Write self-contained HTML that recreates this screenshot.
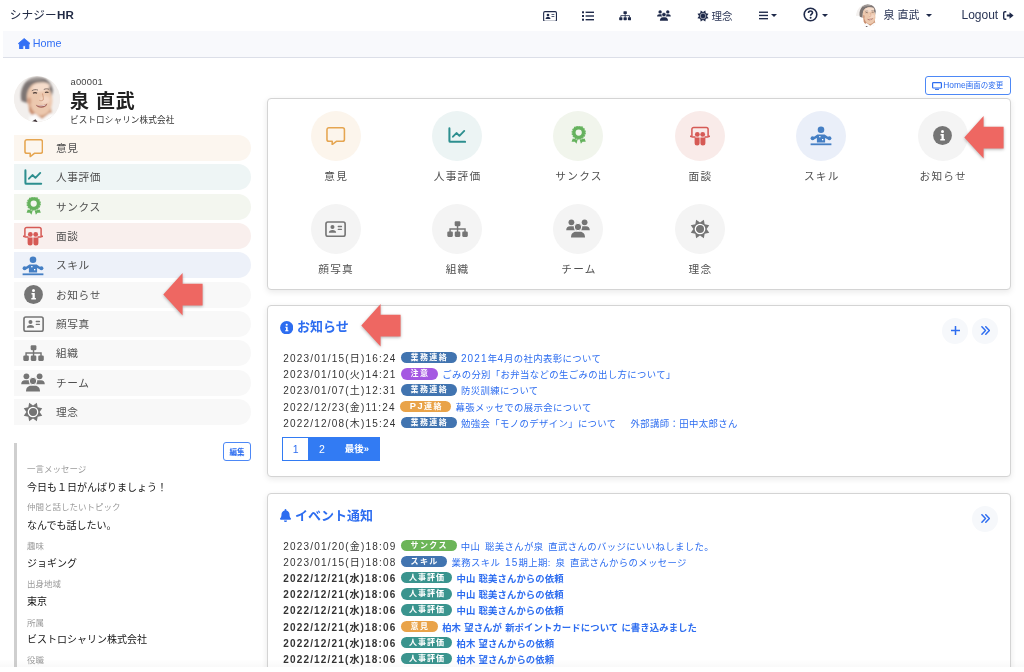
<!DOCTYPE html>
<html lang="ja">
<head>
<meta charset="utf-8">
<title>シナジーHR</title>
<style>
*{box-sizing:border-box;margin:0;padding:0}
html,body{width:1024px;height:672px;overflow:hidden;background:#fff}
body{will-change:transform;font-family:"Liberation Sans","Noto Sans CJK JP",sans-serif;color:#333;position:relative;font-size:12px}
.abs{position:absolute}
svg{display:block}
/* ---------- top nav ---------- */
#nav{position:absolute;left:0;top:0;width:1024px;height:31px;background:#fff}
#brand{position:absolute;left:9.700px;top:6.300px;font-size:11.600px;line-height:18px;color:#222b45;letter-spacing:.2px}
#brand b{font-weight:700}
.nv{position:absolute;color:#1f2a4a;fill:#1f2a4a}
.nvt{position:absolute;font-size:10.5px;line-height:16px;color:#2a3555;white-space:nowrap}
.caret{position:absolute;width:0;height:0;border-left:3px solid transparent;border-right:3px solid transparent;border-top:3.5px solid #1f2a4a}
/* ---------- breadcrumb ---------- */
#crumb{position:absolute;left:3px;top:31px;width:1021px;height:27px;background:#f8f9fc;border-bottom:1px solid #dcdfe8}
#crumb span{position:absolute;left:29.700px;top:4.300px;font-size:10.800px;line-height:16px;color:#3370f5}
/* ---------- profile ---------- */
#avatar{position:absolute;left:14.200px;top:76.300px;width:46px;height:46px;border-radius:50%;overflow:hidden;background:#f1ece8}
#uid{position:absolute;left:70.500px;top:76.300px;font-size:9.400px;letter-spacing:.2px;line-height:12px;color:#444}
#uname{position:absolute;left:70px;top:88.700px;letter-spacing:.8px;font-size:19px;line-height:26px;font-weight:700;color:#222;white-space:nowrap}
#ucomp{position:absolute;left:70px;top:113.500px;letter-spacing:.1px;font-size:8.600px;line-height:13px;color:#333;white-space:nowrap}
/* ---------- side menu ---------- */
.mi{position:absolute;left:14px;width:236.5px;height:26px;border-radius:0 13px 13px 0;font-size:10.7px;line-height:26px;color:#505050;letter-spacing:.6px;padding-left:42px;white-space:nowrap}
.mi svg{position:absolute;left:9px;top:4px}
/* ---------- profile info ---------- */
#pinfo{position:absolute;left:13.6px;top:442.5px;width:3.6px;height:240px;background:#cfcfcf}
.btn{position:absolute;border:1px solid #4d88f6;border-radius:3px;color:#2d6df0;background:#fff;white-space:nowrap;text-align:center}
.pl{position:absolute;left:27px;font-size:8.5px;line-height:12px;color:#9a9a9a;white-space:nowrap}
.pv{position:absolute;left:27px;font-size:10px;line-height:16px;color:#151515;white-space:nowrap}
/* ---------- cards ---------- */
.card{position:absolute;left:267px;width:744px;background:#fff;border:1px solid #d4d4d4;border-radius:4px;box-shadow:0 2px 6px rgba(0,0,0,.09)}
.ic{position:absolute;width:50px;height:50px;border-radius:50%}
.il{position:absolute;width:120px;text-align:center;font-size:10.7px;line-height:16px;color:#505050;letter-spacing:1.2px;padding-left:1.2px;white-space:nowrap}
.ct{position:absolute;font-size:13px;line-height:20px;font-weight:700;color:#2d6df0;white-space:nowrap}
.row{position:absolute;left:283.3px;font-size:9.4px;line-height:16px;color:#333;white-space:nowrap;letter-spacing:.37px}
.row .n{font-size:10px;letter-spacing:1.12px}
.row .d{font-size:10px;letter-spacing:1.19px}
.row.b .d{letter-spacing:1.16px}
.row.b a{letter-spacing:.07px}
.bd.hy{letter-spacing:1px;padding:0 7.4px 0 8.4px}
.row a{color:#2d6df0;text-decoration:none;word-spacing:1.8px}
.row.b a{word-spacing:.5px}
.row.b, .row.b a{font-weight:700}
.bd{display:inline-block;height:11.5px;line-height:11.5px;border-radius:6px;color:#fff;font-size:8px;font-weight:700;padding:0 8.6px 0 10px;margin:0 4.2px 0 4.1px;vertical-align:2px;letter-spacing:1.4px}
.rb{position:absolute;width:26px;height:26px;border-radius:50%;background:#f6f8fb;color:#2d6df0;text-align:center}
</style>
</head>
<body>

<!-- NAV -->
<div id="nav">
  <div id="brand">シナジー<b>HR</b></div>
</div>

<!-- BREADCRUMB -->
<div id="crumb">
  <svg class="abs" style="left:14.900px;top:6.500px" width="12.400" height="11.400" viewBox="0 0 12.400 11.400"><path d="M.5 5.300L6.200 .5l5.700 4.800v.5h-1v5.100H7.500V7.700H4.900v3.200H1.500V5.800h-1z" fill="#3370f5" stroke="#3370f5" stroke-width=".8" stroke-linejoin="round"/></svg>
  <span>Home</span>
</div>

<!-- PROFILE -->
<div id="avatar"><svg width="46" height="46" viewBox="0 0 46 46"><defs><filter id="fb" x="-20%" y="-20%" width="140%" height="140%"><feGaussianBlur stdDeviation=".8"/></filter><filter id="fb2" x="-20%" y="-20%" width="140%" height="140%"><feGaussianBlur stdDeviation=".45"/></filter><clipPath id="fc"><circle cx="23" cy="23" r="23"/></clipPath></defs><g clip-path="url(#fc)"><rect width="46" height="46" fill="#f2efed"/><g filter="url(#fb)"><path d="M7.500 25C5 13 11 1.500 23 1c9-.3 14.500 5 16 13.500l-1.500 7-3-9C31 8.500 27 7.500 23 8c-6 .8-9 5-9.500 11L13 27z" fill="#7d7573"/><path d="M12 6c3-3 7-4.500 11-4.500 3 0 6 1 8 2.500-6-.5-12 .5-19 2z" fill="#a39c99"/><path d="M14 25c0 7 2.500 12 5.500 15.500l-2 7.500h19l2-8c-1-3-1.500-7-1.500-11z" fill="#cf9b7c"/><ellipse cx="25.600" cy="23" rx="12.600" ry="16.600" fill="#ecc8ae" transform="rotate(-10 25.600 23)"/><ellipse cx="27" cy="11" rx="9" ry="4.500" fill="#f5dccb" transform="rotate(-8 27 11)"/><ellipse cx="31" cy="24" rx="5" ry="4" fill="#f4d6c3"/><ellipse cx="15.300" cy="25" rx="2" ry="3.600" fill="#d39f83"/><path d="M16 27c1 6 4 10 8 12l-3 4-6-8z" fill="#c98f70"/><path d="M15 41l6-3.500 7 5.500 8-6 7 2v8H15z" fill="#fcfcfc"/></g><g filter="url(#fb2)"><path d="M17.800 14.800c2-1.300 4.200-1.500 6.200-.7M29.800 13.500c1.800-.9 3.600-.9 5.200-.2" stroke="#7a6a63" stroke-width=".9" fill="none"/><path d="M19 17.300c1.300-.8 2.800-.8 4 0M31 16.500c1.200-.6 2.400-.6 3.500 0" stroke="#4a3b36" stroke-width="1.200" fill="none"/><path d="M28.500 17.500c.6 3 1.200 5 .6 6.600-1 .8-2.600.8-3.800.2" stroke="#cf987c" stroke-width=".9" fill="none"/><path d="M21.800 28.800c3.500 1 8 .6 11.600-1.400-.8 2.900-3.300 4.400-6.200 4.400-2.600 0-4.500-1.200-5.400-3z" fill="#a5645a"/><path d="M23 29.200c3 .7 6.500.4 9.300-.9-.6 1.300-2.500 2-4.700 2-2 0-3.800-.4-4.600-1.100z" fill="#f7ecea"/><path d="M17 46l4.500-2.700 2.500 3.200zM32.500 44.200l6-3.400-1.200 2.800z" fill="#3a3036"/></g></g></svg></div>
<div id="uid">a00001</div>
<div id="uname">泉 直武</div>
<div id="ucomp">ビストロシャリン株式会社</div>


<svg class="abs" style="left:543.3px;top:10.6px" width="14.1" height="10.9" viewBox="0 0 22 17"><rect x="1" y="1" width="20" height="15" rx="2" fill="none" stroke="#1f2a4a" stroke-width="1.700"/><circle cx="7.800" cy="6.300" r="2.100" fill="#1f2a4a"/><path d="M4 12.300c0-2 1.500-2.900 3.800-2.900s3.800.9 3.800 2.900z" fill="#1f2a4a"/><rect x="13.200" y="5" width="4.600" height="1.400" rx=".5" fill="#1f2a4a"/><rect x="13.200" y="8" width="4.600" height="1.400" rx=".5" fill="#1f2a4a"/></svg>
<svg class="abs" style="left:582px;top:11px" width="12" height="10" viewBox="0 0 12 10"><g fill="#1f2a4a"><rect x="0" y=".3" width="2" height="2"/><rect x="0" y="4" width="2" height="2"/><rect x="0" y="7.700" width="2" height="2"/><rect x="3.600" y=".6" width="8.400" height="1.400"/><rect x="3.600" y="4.300" width="8.400" height="1.400"/><rect x="3.600" y="8" width="8.400" height="1.400"/></g></svg>
<svg class="abs" style="left:619.0px;top:11.2px" width="12.3" height="9.5" viewBox="0 0 22 17"><rect x="8" y=".3" width="6" height="5.200" rx="1.200" fill="#1f2a4a"/><rect x=".3" y="11" width="5.800" height="5.600" rx="1.200" fill="#1f2a4a"/><rect x="8.100" y="11" width="5.800" height="5.600" rx="1.200" fill="#1f2a4a"/><rect x="15.900" y="11" width="5.800" height="5.600" rx="1.200" fill="#1f2a4a"/><path d="M11 5v6.500M3.200 11.500V8.300h15.600v3.200" fill="none" stroke="#1f2a4a" stroke-width="1.500"/></svg>
<svg class="abs" style="left:657.0px;top:10.3px" width="13.9" height="11.0" viewBox="0 0 24 19"><circle cx="5.400" cy="3.300" r="2.900" fill="#1f2a4a"/><circle cx="18.600" cy="3.300" r="2.900" fill="#1f2a4a"/><circle cx="12" cy="8" r="3.700" fill="#1f2a4a" stroke="#fff" stroke-width="1"/><path d="M.2 11.300c0-2.800 1.500-4 3.700-4h2.600c.6 0 1 .1 1.400.3-.3 1.500.2 2.800 1 3.700zM23.800 11.300c0-2.800-1.500-4-3.700-4h-2.600c-.6 0-1 .1-1.400.3.300 1.500-.2 2.800-1 3.700z" fill="#1f2a4a"/><path d="M5 18.400c0-3.500 2-5.700 4.800-5.700h4.400c2.800 0 4.800 2.200 4.800 5.700z" fill="#1f2a4a"/></svg>
<svg class="abs" style="left:696.6px;top:9.9px" width="12.0" height="12.0" viewBox="0 0 20 20"><polygon points="13.83,0.76 14.67,5.33 19.24,6.17 16.60,10.00 19.24,13.83 14.67,14.67 13.83,19.24 10.00,16.60 6.17,19.24 5.33,14.67 0.76,13.83 3.40,10.00 0.76,6.17 5.33,5.33 6.17,0.76 10.00,3.40" fill="#1f2a4a"/><circle cx="10" cy="10" r="4.700" fill="none" stroke="#fff" stroke-width="0.900"/></svg>
<div class="nvt" style="left:711.500px;top:8px">理念</div>
<svg class="abs" style="left:759px;top:10.800px" width="9.200" height="9" viewBox="0 0 10 9"><g fill="#1f2a4a"><rect y=".2" width="10" height="1.500"/><rect y="3.700" width="10" height="1.500"/><rect y="7.200" width="10" height="1.500"/></g></svg>
<div class="caret" style="left:771.200px;top:13.600px"></div>
<svg class="abs" style="left:803.200px;top:6.600px" width="15" height="15" viewBox="0 0 15 15"><circle cx="7.500" cy="7.500" r="6.300" fill="none" stroke="#1f2a4a" stroke-width="1.600"/><path d="M5.500 6c0-1.200.9-2 2-2s2 .7 2 1.800c0 1.300-1.900 1.400-1.900 2.900" fill="none" stroke="#1f2a4a" stroke-width="1.600"/><circle cx="7.600" cy="10.800" r="1" fill="#1f2a4a"/></svg>
<div class="caret" style="left:822px;top:14px"></div>
<div class="abs" style="left:856px;top:3.500px;width:23.400px;height:23.400px;border-radius:50%;overflow:hidden"><svg width="23.400" height="23.400" viewBox="0 0 46 46"><defs><filter id="gb" x="-20%" y="-20%" width="140%" height="140%"><feGaussianBlur stdDeviation=".8"/></filter><filter id="gb2" x="-20%" y="-20%" width="140%" height="140%"><feGaussianBlur stdDeviation=".45"/></filter><clipPath id="gc"><circle cx="23" cy="23" r="23"/></clipPath></defs><g clip-path="url(#gc)"><rect width="23.400" height="23.400" fill="#f2efed"/><g filter="url(#gb)"><path d="M7.500 25C5 13 11 1.500 23 1c9-.3 14.500 5 16 13.500l-1.500 7-3-9C31 8.500 27 7.500 23 8c-6 .8-9 5-9.500 11L13 27z" fill="#7d7573"/><path d="M12 6c3-3 7-4.500 11-4.500 3 0 6 1 8 2.500-6-.5-12 .5-19 2z" fill="#a39c99"/><path d="M14 25c0 7 2.500 12 5.500 15.500l-2 7.500h19l2-8c-1-3-1.500-7-1.500-11z" fill="#cf9b7c"/><ellipse cx="25.600" cy="23" rx="12.600" ry="16.600" fill="#ecc8ae" transform="rotate(-10 25.600 23)"/><ellipse cx="27" cy="11" rx="9" ry="4.500" fill="#f5dccb" transform="rotate(-8 27 11)"/><ellipse cx="31" cy="24" rx="5" ry="4" fill="#f4d6c3"/><ellipse cx="15.300" cy="25" rx="2" ry="3.600" fill="#d39f83"/><path d="M16 27c1 6 4 10 8 12l-3 4-6-8z" fill="#c98f70"/><path d="M15 41l6-3.500 7 5.500 8-6 7 2v8H15z" fill="#fcfcfc"/></g><g filter="url(#gb2)"><path d="M17.800 14.800c2-1.300 4.200-1.500 6.200-.7M29.800 13.500c1.800-.9 3.600-.9 5.200-.2" stroke="#7a6a63" stroke-width=".9" fill="none"/><path d="M19 17.300c1.300-.8 2.800-.8 4 0M31 16.500c1.200-.6 2.400-.6 3.500 0" stroke="#4a3b36" stroke-width="1.200" fill="none"/><path d="M28.500 17.500c.6 3 1.200 5 .6 6.600-1 .8-2.600.8-3.800.2" stroke="#cf987c" stroke-width=".9" fill="none"/><path d="M21.800 28.800c3.500 1 8 .6 11.600-1.400-.8 2.900-3.300 4.400-6.200 4.400-2.600 0-4.500-1.200-5.400-3z" fill="#a5645a"/><path d="M23 29.200c3 .7 6.500.4 9.300-.9-.6 1.300-2.500 2-4.700 2-2 0-3.800-.4-4.600-1.100z" fill="#f7ecea"/><path d="M17 46l4.500-2.700 2.500 3.200zM32.500 44.200l6-3.400-1.200 2.800z" fill="#3a3036"/></g></g></svg></div>
<div class="nvt" style="left:883.500px;top:6.500px;font-size:11px">泉 直武</div>
<div class="caret" style="left:925.500px;top:13.500px"></div>
<div class="nvt" style="left:961.500px;top:7px;font-size:12px">Logout</div>
<svg class="abs" style="left:1002.700px;top:11px" width="11" height="9" viewBox="0 0 11 9"><path d="M3.300.7H2A1.300 1.300 0 0 0 .7 2v5A1.300 1.300 0 0 0 2 8.300h1.300" fill="none" stroke="#1f2a4a" stroke-width="1.400"/><path d="M3.800 3.400h2.700V1.200L10.600 4.500 6.500 7.800V5.600H3.800z" fill="#1f2a4a"/></svg>
<div class="mi" style="top:135.00px;background:#fcf6ef"><svg class="abs" style="left:9.9px;top:3.3px" width="19.4" height="19.4" viewBox="0 0 20 20"><path d="M3 1.800h14a2 2 0 0 1 2 2v10a2 2 0 0 1-2 2h-6.300l-4.300 3.300v-3.300H3a2 2 0 0 1-2-2v-10a2 2 0 0 1 2-2z" fill="none" stroke="#e5a550" stroke-width="1.600" stroke-linejoin="round"/></svg>意見</div>
<div class="mi" style="top:164.33px;background:#eef5f5"><svg class="abs" style="left:10.0px;top:4.6px" width="18.6" height="16.7" viewBox="0 0 20 18"><path d="M1.500 1.500v13.500a1 1 0 0 0 1 1h16" fill="none" stroke="#2d8f8f" stroke-width="2.200" stroke-linecap="round"/><path d="M5.300 10.500l3.800-4 3.200 3 5.200-5.300" fill="none" stroke="#2d8f8f" stroke-width="2" stroke-linecap="round" stroke-linejoin="round"/></svg>人事評価</div>
<div class="mi" style="top:193.66px;background:#f3f6ef"><svg class="abs" style="left:11.6px;top:3.4px" width="15.4" height="19.2" viewBox="0 0 16 20"><circle cx="8" cy="6.900" r="5" fill="none" stroke="#65b25d" stroke-width="3.500"/><circle cx="8" cy="6.900" r="6.900" fill="none" stroke="#65b25d" stroke-width="1.100" stroke-dasharray="1.800 0.910"/><path d="M1.800 13l5.100 1.300-1.200 4.300-1.700-2.100H.6zM14.200 13l-5.100 1.300 1.200 4.300 1.700-2.100h3.400z" fill="#65b25d"/></svg>サンクス</div>
<div class="mi" style="top:222.99px;background:#f9efed"><svg class="abs" style="left:9.3px;top:3.0px" width="20.0" height="20.0" viewBox="0 0 20 20"><path d="M1.900 10V3.200a1.800 1.800 0 0 1 1.800-1.800h12.600a1.800 1.800 0 0 1 1.800 1.800V10" fill="none" stroke="#d65a55" stroke-width="1.500"/><path d="M.4 10.200c1.500 .6 3 .9 4.500 .9M19.600 10.200c-1.500 .6-3 .9-4.500 .9" fill="none" stroke="#d65a55" stroke-width="1.500" stroke-linecap="round"/><circle cx="7.300" cy="8.400" r="2.400" fill="#d65a55"/><circle cx="12.700" cy="8.400" r="2.400" fill="#d65a55"/><path d="M4.600 11.600h5v5.300a2.500 2.500 0 0 1-5 0zM10.400 11.600h5v5.300a2.500 2.500 0 0 1-5 0z" fill="#d65a55"/></svg>面談</div>
<div class="mi" style="top:252.32px;background:#edf1f9"><svg class="abs" style="left:8.3px;top:3.7px" width="22.0" height="20.0" viewBox="0 0 22 20"><circle cx="11" cy="3.800" r="3.300" fill="#457fc4"/><path d="M7.400 8.500h7.200l3.300 2.300 .9 1.200-1.300 1.300-2.400-1.200v4.400H6.900v-4.400l-2.400 1.200-1.300-1.300 .9-1.200z" fill="#457fc4"/><circle cx="2.600" cy="12.300" r="2" fill="#457fc4"/><circle cx="19.400" cy="12.300" r="2" fill="#457fc4"/><rect x=".6" y="17.400" width="20.800" height="1.800" fill="#457fc4"/><rect x="9.200" y="10" width="1.300" height="1.300" fill="#fff"/><rect x="12" y="13" width="1.300" height="1.300" fill="#fff"/></svg>スキル</div>
<div class="mi" style="top:281.65px;background:#f8f8f8"><svg class="abs" style="left:9.8px;top:3.5px" width="19.0" height="19.0" viewBox="0 0 19 19"><circle cx="9.500" cy="9.500" r="9.400" fill="#757575"/><circle cx="9.500" cy="5.400" r="1.500" fill="#fff"/><path d="M7.500 8h3.300v5h1.100v1.600H7.300V13h1.200V9.600H7.500z" fill="#fff"/></svg>お知らせ</div>
<div class="mi" style="top:310.98px;background:#f8f8f8"><svg class="abs" style="left:9.0px;top:4.8px" width="21.1" height="16.3" viewBox="0 0 22 17"><rect x="1" y="1" width="20" height="15" rx="2" fill="none" stroke="#757575" stroke-width="1.700"/><circle cx="7.800" cy="6.300" r="2.100" fill="#757575"/><path d="M4 12.300c0-2 1.500-2.900 3.800-2.900s3.800.9 3.800 2.900z" fill="#757575"/><rect x="13.200" y="5" width="4.600" height="1.400" rx=".5" fill="#757575"/><rect x="13.200" y="8" width="4.600" height="1.400" rx=".5" fill="#757575"/></svg>顔写真</div>
<div class="mi" style="top:340.31px;background:#f8f8f8"><svg class="abs" style="left:9.0px;top:4.8px" width="21.1" height="16.3" viewBox="0 0 22 17"><rect x="8" y=".3" width="6" height="5.200" rx="1.200" fill="#757575"/><rect x=".3" y="11" width="5.800" height="5.600" rx="1.200" fill="#757575"/><rect x="8.100" y="11" width="5.800" height="5.600" rx="1.200" fill="#757575"/><rect x="15.900" y="11" width="5.800" height="5.600" rx="1.200" fill="#757575"/><path d="M11 5v6.500M3.200 11.500V8.300h15.600v3.200" fill="none" stroke="#757575" stroke-width="1.500"/></svg>組織</div>
<div class="mi" style="top:369.64px;background:#f8f8f8"><svg class="abs" style="left:7.3px;top:3.5px" width="24.0" height="19.0" viewBox="0 0 24 19"><circle cx="5.400" cy="3.300" r="2.900" fill="#757575"/><circle cx="18.600" cy="3.300" r="2.900" fill="#757575"/><circle cx="12" cy="8" r="3.700" fill="#757575" stroke="#f7f7f7" stroke-width="1"/><path d="M.2 11.300c0-2.800 1.500-4 3.700-4h2.600c.6 0 1 .1 1.400.3-.3 1.500.2 2.800 1 3.700zM23.800 11.300c0-2.800-1.500-4-3.700-4h-2.600c-.6 0-1 .1-1.400.3.300 1.500-.2 2.800-1 3.700z" fill="#757575"/><path d="M5 18.400c0-3.500 2-5.700 4.800-5.700h4.400c2.800 0 4.800 2.200 4.800 5.700z" fill="#757575"/></svg>チーム</div>
<div class="mi" style="top:398.97px;background:#f8f8f8"><svg class="abs" style="left:9.3px;top:3.0px" width="20.0" height="20.0" viewBox="0 0 20 20"><polygon points="13.83,0.76 14.67,5.33 19.24,6.17 16.60,10.00 19.24,13.83 14.67,14.67 13.83,19.24 10.00,16.60 6.17,19.24 5.33,14.67 0.76,13.83 3.40,10.00 0.76,6.17 5.33,5.33 6.17,0.76 10.00,3.40" fill="#757575"/><circle cx="10" cy="10" r="4.700" fill="none" stroke="#fff" stroke-width="1.300"/></svg>理念</div>
<div class="card" style="top:98px;height:192px"></div>
<div class="ic" style="left:310.6px;top:110.8px;background:#fcf5ec"><svg class="abs" style="left:15.6px;top:15.3px" width="19.4" height="19.4" viewBox="0 0 20 20"><path d="M3 1.800h14a2 2 0 0 1 2 2v10a2 2 0 0 1-2 2h-6.300l-4.300 3.300v-3.300H3a2 2 0 0 1-2-2v-10a2 2 0 0 1 2-2z" fill="none" stroke="#e5a550" stroke-width="1.600" stroke-linejoin="round"/></svg></div>
<div class="il" style="left:275.6px;top:168.2px">意見</div>
<div class="ic" style="left:432.0px;top:110.8px;background:#ecf4f4"><svg class="abs" style="left:15.7px;top:16.6px" width="18.6" height="16.7" viewBox="0 0 20 18"><path d="M1.500 1.500v13.500a1 1 0 0 0 1 1h16" fill="none" stroke="#2d8f8f" stroke-width="2.200" stroke-linecap="round"/><path d="M5.300 10.500l3.800-4 3.200 3 5.200-5.300" fill="none" stroke="#2d8f8f" stroke-width="2" stroke-linecap="round" stroke-linejoin="round"/></svg></div>
<div class="il" style="left:397.0px;top:168.2px">人事評価</div>
<div class="ic" style="left:553.4px;top:110.8px;background:#f1f5ec"><svg class="abs" style="left:17.3px;top:15.4px" width="15.4" height="19.2" viewBox="0 0 16 20"><circle cx="8" cy="6.900" r="5" fill="none" stroke="#65b25d" stroke-width="3.500"/><circle cx="8" cy="6.900" r="6.900" fill="none" stroke="#65b25d" stroke-width="1.100" stroke-dasharray="1.800 0.910"/><path d="M1.800 13l5.100 1.300-1.200 4.300-1.700-2.100H.6zM14.200 13l-5.100 1.300 1.200 4.300 1.700-2.100h3.400z" fill="#65b25d"/></svg></div>
<div class="il" style="left:518.4px;top:168.2px">サンクス</div>
<div class="ic" style="left:674.8px;top:110.8px;background:#f9ebe9"><svg class="abs" style="left:15.0px;top:15.0px" width="20.0" height="20.0" viewBox="0 0 20 20"><path d="M1.900 10V3.200a1.800 1.800 0 0 1 1.800-1.800h12.600a1.800 1.800 0 0 1 1.800 1.800V10" fill="none" stroke="#d65a55" stroke-width="1.500"/><path d="M.4 10.200c1.500 .6 3 .9 4.500 .9M19.600 10.200c-1.500 .6-3 .9-4.500 .9" fill="none" stroke="#d65a55" stroke-width="1.500" stroke-linecap="round"/><circle cx="7.300" cy="8.400" r="2.400" fill="#d65a55"/><circle cx="12.700" cy="8.400" r="2.400" fill="#d65a55"/><path d="M4.600 11.600h5v5.300a2.500 2.500 0 0 1-5 0zM10.400 11.600h5v5.300a2.500 2.500 0 0 1-5 0z" fill="#d65a55"/></svg></div>
<div class="il" style="left:639.8px;top:168.2px">面談</div>
<div class="ic" style="left:796.2px;top:110.8px;background:#eaeff9"><svg class="abs" style="left:14.0px;top:15.7px" width="22.0" height="20.0" viewBox="0 0 22 20"><circle cx="11" cy="3.800" r="3.300" fill="#457fc4"/><path d="M7.400 8.500h7.200l3.300 2.300 .9 1.200-1.300 1.300-2.400-1.200v4.400H6.900v-4.400l-2.400 1.200-1.300-1.300 .9-1.200z" fill="#457fc4"/><circle cx="2.600" cy="12.300" r="2" fill="#457fc4"/><circle cx="19.400" cy="12.300" r="2" fill="#457fc4"/><rect x=".6" y="17.400" width="20.800" height="1.800" fill="#457fc4"/><rect x="9.200" y="10" width="1.300" height="1.300" fill="#fff"/><rect x="12" y="13" width="1.300" height="1.300" fill="#fff"/></svg></div>
<div class="il" style="left:761.2px;top:168.2px">スキル</div>
<div class="ic" style="left:917.6px;top:110.8px;background:#f4f4f4"><svg class="abs" style="left:15.5px;top:15.5px" width="19.0" height="19.0" viewBox="0 0 19 19"><circle cx="9.500" cy="9.500" r="9.400" fill="#757575"/><circle cx="9.500" cy="5.400" r="1.500" fill="#fff"/><path d="M7.500 8h3.300v5h1.100v1.600H7.300V13h1.200V9.600H7.500z" fill="#fff"/></svg></div>
<div class="il" style="left:882.6px;top:168.2px">お知らせ</div>
<div class="ic" style="left:310.6px;top:203.9px;background:#f4f4f4"><svg class="abs" style="left:14.7px;top:16.8px" width="21.1" height="16.3" viewBox="0 0 22 17"><rect x="1" y="1" width="20" height="15" rx="2" fill="none" stroke="#757575" stroke-width="1.700"/><circle cx="7.800" cy="6.300" r="2.100" fill="#757575"/><path d="M4 12.300c0-2 1.500-2.900 3.800-2.900s3.800.9 3.800 2.900z" fill="#757575"/><rect x="13.200" y="5" width="4.600" height="1.400" rx=".5" fill="#757575"/><rect x="13.200" y="8" width="4.600" height="1.400" rx=".5" fill="#757575"/></svg></div>
<div class="il" style="left:275.6px;top:261.3px">顔写真</div>
<div class="ic" style="left:432.0px;top:203.9px;background:#f4f4f4"><svg class="abs" style="left:14.7px;top:16.8px" width="21.1" height="16.3" viewBox="0 0 22 17"><rect x="8" y=".3" width="6" height="5.200" rx="1.200" fill="#757575"/><rect x=".3" y="11" width="5.800" height="5.600" rx="1.200" fill="#757575"/><rect x="8.100" y="11" width="5.800" height="5.600" rx="1.200" fill="#757575"/><rect x="15.900" y="11" width="5.800" height="5.600" rx="1.200" fill="#757575"/><path d="M11 5v6.500M3.200 11.500V8.300h15.600v3.200" fill="none" stroke="#757575" stroke-width="1.500"/></svg></div>
<div class="il" style="left:397.0px;top:261.3px">組織</div>
<div class="ic" style="left:553.4px;top:203.9px;background:#f4f4f4"><svg class="abs" style="left:13.0px;top:15.5px" width="24.0" height="19.0" viewBox="0 0 24 19"><circle cx="5.400" cy="3.300" r="2.900" fill="#757575"/><circle cx="18.600" cy="3.300" r="2.900" fill="#757575"/><circle cx="12" cy="8" r="3.700" fill="#757575" stroke="#f7f7f7" stroke-width="1"/><path d="M.2 11.300c0-2.800 1.500-4 3.700-4h2.600c.6 0 1 .1 1.400.3-.3 1.500.2 2.800 1 3.700zM23.800 11.300c0-2.800-1.500-4-3.700-4h-2.600c-.6 0-1 .1-1.400.3.300 1.500-.2 2.800-1 3.700z" fill="#757575"/><path d="M5 18.400c0-3.500 2-5.700 4.800-5.700h4.400c2.800 0 4.800 2.200 4.800 5.700z" fill="#757575"/></svg></div>
<div class="il" style="left:518.4px;top:261.3px">チーム</div>
<div class="ic" style="left:674.8px;top:203.9px;background:#f4f4f4"><svg class="abs" style="left:15.0px;top:15.0px" width="20.0" height="20.0" viewBox="0 0 20 20"><polygon points="13.83,0.76 14.67,5.33 19.24,6.17 16.60,10.00 19.24,13.83 14.67,14.67 13.83,19.24 10.00,16.60 6.17,19.24 5.33,14.67 0.76,13.83 3.40,10.00 0.76,6.17 5.33,5.33 6.17,0.76 10.00,3.40" fill="#757575"/><circle cx="10" cy="10" r="4.700" fill="none" stroke="#fff" stroke-width="1.300"/></svg></div>
<div class="il" style="left:639.8px;top:261.3px">理念</div>
<!-- HOME CHANGE BUTTON -->
<div class="btn" style="left:925px;top:76px;width:86px;height:18.500px;font-size:7.500px;line-height:16.500px;text-align:left;padding-left:17.300px">
  <svg class="abs" style="left:5.500px;top:4.700px" width="10" height="8" viewBox="0 0 10 8"><rect x=".6" y=".6" width="8.800" height="5.400" rx=".8" fill="none" stroke="#2d6df0" stroke-width="1.200"/><rect x="3" y="6.800" width="4" height="1.100" fill="#2d6df0"/></svg><span style="font-size:8.400px">Home</span>画面の変更</div>

<!-- NEWS CARD -->
<div class="card" style="top:305px;height:172px"></div>
<svg class="abs" style="left:279.500px;top:320.600px" width="13.400" height="13.400" viewBox="0 0 19 19"><circle cx="9.500" cy="9.500" r="9.400" fill="#2d6df0"/><circle cx="9.500" cy="5.400" r="1.500" fill="#fff"/><path d="M7.500 8h3.300v5h1.100v1.600H7.300V13h1.200V9.600H7.500z" fill="#fff"/></svg>
<div class="ct" style="left:297px;top:317.200px">お知らせ</div>
<div class="rb" style="left:942.100px;top:317.600px"><svg class="abs" style="left:8.5px;top:8.5px" width="9" height="9" viewBox="0 0 10 10"><path d="M5 .5v9M.5 5h9" stroke="#2d6df0" stroke-width="1.700" stroke-linecap="round" fill="none"/></svg></div>
<div class="rb" style="left:972.100px;top:317.600px"><svg class="abs" style="left:8.8px;top:8.5px" width="9" height="9" viewBox="0 0 10 10"><path d="M1 .8L5 5 1 9.200M5.300 .8L9.300 5 5.300 9.200" stroke="#2d6df0" stroke-width="1.600" stroke-linecap="round" stroke-linejoin="round" fill="none"/></svg></div>

<div class="row" style="top:350.80px"><span class="d">2023/01/15(日)16:24</span><span class="bd" style="background:#4174b0">業務連絡</span><a><span class="n">2021</span>年<span class="n">4</span>月の社内表彰について</a></div>
<div class="row" style="top:367.05px"><span class="d">2023/01/10(火)14:21</span><span class="bd" style="background:#a559e2">注意</span><a>ごみの分別「お弁当などの生ごみの出し方について」</a></div>
<div class="row" style="top:383.30px"><span class="d">2023/01/07(土)12:31</span><span class="bd" style="background:#4174b0">業務連絡</span><a>防災訓練について</a></div>
<div class="row" style="top:399.55px"><span class="d">2022/12/23(金)11:24</span><span class="bd" style="background:#e9a349"><span style="font-size:9.300px;line-height:8px">PJ</span>連絡</span><a>幕張メッセでの展示会について</a></div>
<div class="row" style="top:415.80px"><span class="d">2022/12/08(木)15:24</span><span class="bd" style="background:#4174b0">業務連絡</span><a>勉強会「モノのデザイン」について<span style="letter-spacing:4.500px">　</span>外部講師：田中太郎さん</a></div>

<div class="abs" style="left:282.400px;top:437px;width:97.200px;height:24.400px;background:#327bf3"></div>
<div class="abs" style="left:282.400px;top:437px;width:26.800px;height:24.400px;background:#fff;border:1px solid #327bf3;color:#2d6df0;font-size:10.500px;line-height:22px;text-align:center">1</div>
<div class="abs" style="left:309px;top:437px;width:26px;height:24px;color:#fff;font-size:10.500px;line-height:24px;text-align:center">2</div>
<div class="abs" style="left:335px;top:437px;width:44px;height:24px;color:#fff;font-size:9.500px;line-height:24px;text-align:center;font-weight:700">最後»</div>

<!-- EVENT CARD -->
<div class="card" style="top:493px;height:200px"></div>
<svg class="abs" style="left:279.500px;top:509px" width="11" height="13" viewBox="0 0 11 13"><path d="M5.500 0a.9.900 0 0 1 .9.900v.5c1.900.4 3.100 2 3.100 3.900 0 2.400.7 3.300 1.300 4 .5.600.1 1.400-.6 1.400H.8c-.7 0-1.100-.8-.6-1.400.6-.7 1.300-1.600 1.300-4 0-1.900 1.200-3.500 3.100-3.900V.9a.9.900 0 0 1 .9-.9zM3.900 11.400h3.200a1.600 1.600 0 0 1-3.200 0z" fill="#2d6df0"/></svg>
<div class="ct" style="left:295px;top:505.500px">イベント通知</div>
<div class="rb" style="left:972.100px;top:505.600px"><svg class="abs" style="left:8.8px;top:8.5px" width="9" height="9" viewBox="0 0 10 10"><path d="M1 .8L5 5 1 9.200M5.300 .8L9.300 5 5.300 9.200" stroke="#2d6df0" stroke-width="1.600" stroke-linecap="round" stroke-linejoin="round" fill="none"/></svg></div>

<div class="row" style="top:538.50px"><span class="d">2023/01/20(金)18:09</span><span class="bd" style="background:#6cb558">サンクス</span><a>中山 聡美さんが泉 直武さんのバッジにいいねしました。</a></div>
<div class="row" style="top:554.70px"><span class="d">2023/01/15(日)18:08</span><span class="bd" style="background:#4174b0">スキル</span><a>業務スキル <span class="n">15</span>期上期: 泉 直武さんからのメッセージ</a></div>
<div class="row b" style="top:570.90px"><span class="d">2022/12/21(水)18:06</span><span class="bd hy" style="background:#3a948e">人事評価</span><a>中山 聡美さんからの依頼</a></div>
<div class="row b" style="top:587.10px"><span class="d">2022/12/21(水)18:06</span><span class="bd hy" style="background:#3a948e">人事評価</span><a>中山 聡美さんからの依頼</a></div>
<div class="row b" style="top:603.30px"><span class="d">2022/12/21(水)18:06</span><span class="bd hy" style="background:#3a948e">人事評価</span><a>中山 聡美さんからの依頼</a></div>
<div class="row b" style="top:619.50px"><span class="d">2022/12/21(水)18:06</span><span class="bd" style="background:#e9a349">意見</span><a>柏木 望さんが 新ポイントカードについて に書き込みました</a></div>
<div class="row b" style="top:635.70px"><span class="d">2022/12/21(水)18:06</span><span class="bd hy" style="background:#3a948e">人事評価</span><a>柏木 望さんからの依頼</a></div>
<div class="row b" style="top:651.90px"><span class="d">2022/12/21(水)18:06</span><span class="bd hy" style="background:#3a948e">人事評価</span><a>柏木 望さんからの依頼</a></div>

<!-- PROFILE INFO -->
<div id="pinfo"></div>
<div class="btn" style="left:223px;top:442px;width:28px;height:18.500px;font-size:7.500px;line-height:20px;font-weight:700">編集</div>
<div class="pl" style="top:462.800px">一言メッセージ</div>
<div class="pv" style="top:479.500px">今日も１日がんばりましょう！</div>
<div class="pl" style="top:501.300px">仲間と話したいトピック</div>
<div class="pv" style="top:517.500px">なんでも話したい。</div>
<div class="pl" style="top:539.600px">趣味</div>
<div class="pv" style="top:555.500px">ジョギング</div>
<div class="pl" style="top:578px">出身地域</div>
<div class="pv" style="top:594px">東京</div>
<div class="pl" style="top:616.500px">所属</div>
<div class="pv" style="top:631.500px">ビストロシャリン株式会社</div>
<div class="pl" style="top:654px">役職</div>

<svg class="abs" style="left:163.4px;top:273.2px;filter:drop-shadow(0 1px 1.500px rgba(0,0,0,.3))" width="40" height="43" viewBox="0 0 40 43"><polygon points="0.300,21.400 19.600,0 19.600,10.700 39.600,10.700 39.600,32.400 19.600,32.400 19.600,42.600" fill="#ee6762"/></svg>
<svg class="abs" style="left:964.4px;top:115.6px;filter:drop-shadow(0 1px 1.500px rgba(0,0,0,.3))" width="40" height="43" viewBox="0 0 40 43"><polygon points="0.300,21.400 19.600,0 19.600,10.700 39.600,10.700 39.600,32.400 19.600,32.400 19.600,42.600" fill="#ee6762"/></svg>
<svg class="abs" style="left:360.7px;top:304.2px;filter:drop-shadow(0 1px 1.500px rgba(0,0,0,.3))" width="40" height="43" viewBox="0 0 40 43"><polygon points="0.300,21.400 19.600,0 19.600,10.700 39.600,10.700 39.600,32.400 19.600,32.400 19.600,42.600" fill="#ee6762"/></svg>
<div class="abs" style="left:0;top:659px;width:1024px;height:8px;background:linear-gradient(rgba(0,0,0,0),rgba(0,0,0,.025))"></div>
<div class="abs" style="left:0;top:667px;width:1024px;height:5px;background:#fff"></div>
</body>
</html>
